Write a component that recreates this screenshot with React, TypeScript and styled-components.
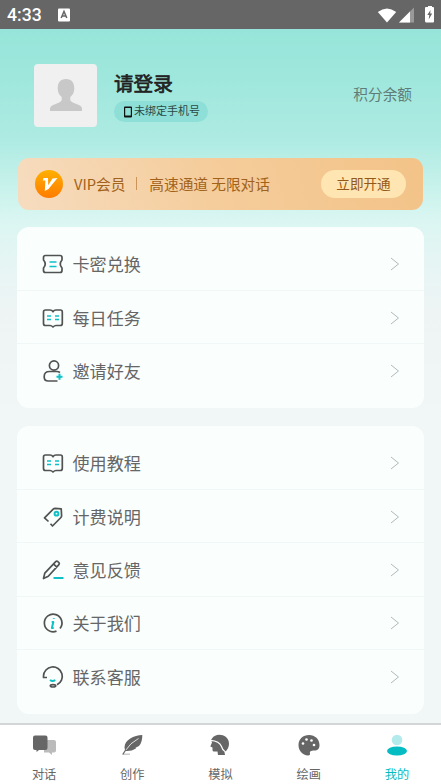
import React from 'react';
import styled, { createGlobalStyle } from 'styled-components';

const GlobalStyle = createGlobalStyle`
  * { box-sizing: border-box; }
  body { margin: 0; font-family: "Noto Sans CJK SC", sans-serif; }
  svg { display: block; flex: none; }
`;

const Screen = styled.div`
  width: 441px;
  height: 784px;
  overflow: hidden;
  display: flex;
  flex-direction: column;
  background: linear-gradient(180deg, #97e5da 29px, #9fe7dd 80px, #aeebe2 140px, #c4f1ea 180px, #dbf6f2 222px, #e5f5f4 260px, #eef4f4 310px, #f1f6f7 420px);
`;

const StatusBar = styled.header`
  height: 29px;
  flex: none;
  display: flex;
  align-items: center;
  padding: 1px 7px 0 7px;
  background: #666;
  color: #fff;
`;

const Clock = styled.span`
  width: 51px;
  font: 500 17.6px/28px Roboto, sans-serif;
`;

const StatusIcons = styled.div`
  display: flex;
  margin-left: auto;
`;

const Profile = styled.section`
  height: 129px;
  flex: none;
  display: flex;
  padding: 35px 29px 0 34px;
`;

const Avatar = styled.div`
  width: 63px;
  height: 63px;
  border-radius: 4px;
  background: #f0f0f0;
  overflow: hidden;
`;

const Identity = styled.div`
  margin-left: 17px;
`;

const Name = styled.h1`
  margin: 4px 0 4px;
  font-size: 19.6px;
  line-height: 29px;
  font-weight: 400;
  -webkit-text-stroke: 0.7px #222;
  color: #222;
`;

const PhoneTag = styled.div`
  display: flex;
  align-items: center;
  width: 94px;
  height: 21px;
  padding-left: 10px;
  gap: 2px;
  border-radius: 11px;
  background: #8edfd8;
  color: #2c4845;
  font-size: 11px;
  line-height: 19px;
  white-space: nowrap;
`;

const PhoneText = styled.span`
  padding-bottom: 2px;
`;

const Points = styled.span`
  margin: 19px 0 0 auto;
  font-size: 14.67px;
  line-height: 21px;
  color: #607c78;
`;

const VipBanner = styled.section`
  height: 52px;
  flex: none;
  margin: 0 18px 17px 18px;
  padding: 0 17px;
  display: flex;
  align-items: center;
  border-radius: 11px;
  background: linear-gradient(75deg, #f6dcbf, #f5cc9a 50%, #f3c388);
  color: #a1621a;
  font-size: 14.67px;
  white-space: nowrap;
`;

const VipText = styled.span`
  padding-bottom: 2px;
`;

const VipLabel = styled(VipText)`
  margin-left: 11px;
`;

const VipDivider = styled.i`
  width: 1px;
  height: 13px;
  margin: 0 12px 1px 11px;
  background: #c99559;
`;

const OpenButton = styled.button`
  margin-left: auto;
  width: 85px;
  height: 28px;
  padding: 0 0 2px;
  border: 0;
  border-radius: 14px;
  background: #ffe5b1;
  color: #955917;
  font: 13.6px/26px "Noto Sans CJK SC", sans-serif;
`;

const Card = styled.section<{ $height: number }>`
  height: ${(p) => p.$height}px;
  flex: none;
  margin: 0 17px 18px;
  padding-top: 10.5px;
  border-radius: 12px;
  background: #fafffe;
`;

const MenuRow = styled.div`
  height: 53.4px;
  display: flex;
  align-items: center;
  padding: 0 23px 0 25px;
  font-size: 17.1px;
  line-height: 26px;
  color: #666;
  & + & { box-shadow: 0 -1px #f0f7f7; }
`;

const MenuLabel = styled.span`
  margin-left: 8.5px;
  flex: 1;
`;

const TabBar = styled.nav`
  height: 62px;
  flex: none;
  margin-top: -9px;
  display: grid;
  grid-template-columns: repeat(5, 1fr);
  background: #fff;
  border-top: 2px solid #d2d6d6;
`;

const Tab = styled.div<{ $active?: boolean }>`
  display: flex;
  flex-direction: column;
  align-items: center;
  padding-top: 8px;
  gap: 8px;
  font-size: 12.2px;
  line-height: 18px;
  color: ${(p) => (p.$active ? '#04bcc2' : '#666')};
`;

const teal = '#0fc0c7';

type IconName = 'ticket' | 'book' | 'invite' | 'tag' | 'pencil' | 'info' | 'support';

const glyphs: Record<IconName, React.ReactNode> = {
  ticket: (
    <>
      <path d="M3.500 2.500h14.500q2 0 2 2V7q-3.500 4 0 8v2.500q0 2-2 2H3.500q-2 0-2-2V15q3.500-4 0-8V4.500q0-2 2-2Z" />
      <path d="M7.500 9h7M7.500 13.500h7" stroke={teal} />
    </>
  ),
  book: (
    <>
      <path d="M3.500 3H8q2 0 3 1.700Q12 3 14 3h4.500Q20.300 3 20.300 5v11.500q0 2-2 2H14q-1.500 0-3 1.500Q9.500 18.500 8 18.500H3.500q-2 0-2-2V5q0-2 2-2Z" />
      <path d="M5 9h4M5 12.500h4M13 9h4M13 12.500h4" stroke={teal} />
    </>
  ),
  invite: (
    <>
      <circle cx="12" cy="5.500" r="4.600" />
      <path d="M18 12.500Q16.500 11.500 14.500 11.500H7.500q-5.300 0-5.300 5v.5q0 4 4 4h9.300" />
      <path d="M17.500 13.800v6M14.500 16.800h6" stroke={teal} strokeWidth="2" />
    </>
  ),
  tag: (
    <>
      <path d="M6.500 15.500 2.500 11.800l8.700-8.700q.8-.8 2-.8l6 .5.400 7q0 1-.700 1.700L10.500 20 8.500 17.800" />
      <circle cx="14.500" cy="7.700" r="1.900" stroke={teal} strokeWidth="2" />
    </>
  ),
  pencil: (
    <>
      <path d="m1.500 19.500 1.300-5.400L13.700 2.600q1-1 2-.1l1.200 1.200q.9.900 0 1.900L6.300 17.300ZM11.500 4.900l3.500 3.400" />
      <path d="M11.500 19H21.500" stroke={teal} strokeWidth="2" />
    </>
  ),
  info: (
    <>
      <path d="M14.500 19.100a8.800 8.800 0 1 1 3.500-2.600" />
      <path d="M9.700 10h1.600l-1.400 6h1.800M11.800 6.300v.7" stroke={teal} strokeWidth="2" />
    </>
  ),
  support: (
    <>
      <path d="M5 11.500H1.500V10a9.400 9.400 0 1 1 13.500 8.800" />
      <path d="M8 14q2.700 2 5.200 0" stroke={teal} strokeWidth="2" />
      <ellipse cx="11" cy="19.800" rx="2.700" ry="1.200" />
    </>
  ),
};

const MenuIcon = ({ name }: { name: IconName }) => (
  <svg width="22" height="22" viewBox="0 0 22 22" overflow="visible" fill="none" stroke="#515353" strokeWidth="1.700" strokeLinejoin="round">
    {glyphs[name]}
  </svg>
);

const Chevron = () => (
  <svg width="14" height="16" viewBox="0 0 14 16" fill="none" stroke="#b2b7b9">
    <path d="m4 2 7.500 6L4 14" />
  </svg>
);

const MenuCard = ({ items, height }: { items: [IconName, string][]; height: number }) => (
  <Card $height={height}>
    {items.map(([icon, label]) => (
      <MenuRow key={label}>
        <MenuIcon name={icon} />
        <MenuLabel>{label}</MenuLabel>
        <Chevron />
      </MenuRow>
    ))}
  </Card>
);

const TabIcon = ({ children }: { children: React.ReactNode }) => (
  <svg width="26" height="24" viewBox="0 0 26 24" fill="#666">{children}</svg>
);

export default function App() {
  return (
    <Screen>
      <GlobalStyle />
      <StatusBar>
        <Clock>4:33</Clock>
        <svg width="12" height="14" viewBox="0 0 12 14">
          <rect y=".5" width="12" height="13" rx="1" fill="#fff" />
          <path d="m3.200 10 2.800-6.500L8.800 10M4.200 8h3.600" fill="none" stroke="#666" strokeWidth="1.500" />
        </svg>
        <StatusIcons>
          <svg width="57" height="20" viewBox="0 0 57 20" fill="#fff">
            <path d="M.8 7Q10 0 19.200 7L10 17.600Z" />
            <path d="m22 17.500 15-15v15Z" fill="#999" />
            <path d="m22 17.500 11-11v11Z" />
            <path d="M49 2h2V1h4v1h1q1 0 1 1v13.500q0 1-1 1h-6.500q-1.500 0-1.500-1.500V3q0-1 1-1Z" />
            <path d="m53.500 5-3.200 5h2l-.6 4.500 3.500-6h-2Z" fill="#666" />
          </svg>
        </StatusIcons>
      </StatusBar>

      <Profile>
        <Avatar>
          <svg width="63" height="63" viewBox="0 0 63 63" fill="#c8c8c8">
            <path d="M32 15c6 0 8.300 4 8.300 9.500 0 4-1.800 7-4 8.500v2.500c0 1.500.9 2.200 2.500 2.900l6 2.600c2.300 1 3.200 2 3.200 4V47H16v-2c0-2 .9-3 3.200-4l6-2.600c1.600-.7 2.500-1.400 2.500-2.900V33c-2.200-1.500-4-4.500-4-8.500C23.700 19 26 15 32 15Z" />
          </svg>
        </Avatar>
        <Identity>
          <Name>请登录</Name>
          <PhoneTag>
            <svg width="8" height="12" viewBox="0 0 8 12">
              <path fill="#111" fillRule="evenodd" d="M1 .5h6q1 0 1 1v9q0 1-1 1H1q-1 0-1-1v-9q0-1 1-1ZM1.200 2v7.500h5.600V2Z" />
            </svg>
            <PhoneText>未绑定手机号</PhoneText>
          </PhoneTag>
        </Identity>
        <Points>积分余额</Points>
      </Profile>

      <VipBanner>
        <svg width="28" height="28" viewBox="0 0 28 28">
          <defs>
            <linearGradient id="coin" x2="0" y2="1">
              <stop stopColor="#ffb000" />
              <stop offset="1" stopColor="#ff7b00" />
            </linearGradient>
          </defs>
          <circle cx="14" cy="14" r="14" fill="url(#coin)" />
          <path d="M8.500 8H13l.2 7.200L17.500 8.600 22.500 8 13.500 19 9.800 21l.6-10.500H7.800Z" fill="#fff" />
        </svg>
        <VipLabel>VIP会员</VipLabel>
        <VipDivider />
        <VipText>高速通道 无限对话</VipText>
        <OpenButton>立即开通</OpenButton>
      </VipBanner>

      <MenuCard height={181} items={[['ticket', '卡密兑换'], ['book', '每日任务'], ['invite', '邀请好友']]} />
      <MenuCard
        height={288}
        items={[['book', '使用教程'], ['tag', '计费说明'], ['pencil', '意见反馈'], ['info', '关于我们'], ['support', '联系客服']]}
      />

      <TabBar>
        <Tab>
          <TabIcon>
            <path d="M13 7h10q2 0 2 2v8.500q0 2-2 2h-2V22l-3-2.500h-5Z" fill="#bbb" />
            <path d="M4 2.500h10.500q2 0 2 2V15q0 2-2 2H8l-2.500 2v-2H4q-2 0-2-2V4.500q0-2 2-2Z" />
          </TabIcon>
          对话
        </Tab>
        <Tab>
          <TabIcon>
            <path d="M4 20.500h7V22H4Z" fill="#ccc" />
            <path d="M23.300 2C15 2.500 5.500 6.500 5.500 14.500q0 2.800 1.700 3.500 5.500.2 9.800-2.500l-.5-.8 3.500-1.700q3.500-4 3.300-11Z" />
            <path d="M6.500 17.500Q11 10 19.500 5.500" fill="none" stroke="#fff" strokeWidth=".8" />
            <path d="M3.700 21.500 7 16.500" stroke="#666" strokeWidth="1.300" />
          </TabIcon>
          创作
        </Tab>
        <Tab>
          <TabIcon>
            <path d="M5 5.500C8 .5 15 .8 19 4c4 3.500 3.900 9.500.5 13.500l-2 1.800.5 2.700h-7l-.5-3.500H7q-1.500 0-1.500-1.500v-2.500L3.300 13.500 5 9.500 4 7Z" />
            <path d="M3.500 7.300Q12.500 8 14.500 13.500q1 4 4 5.500" fill="none" stroke="#fff" strokeWidth="1.200" />
          </TabIcon>
          模拟
        </Tab>
        <Tab>
          <TabIcon>
            <path d="M13 2c6 0 10.500 4.200 10.500 10 0 4-2 5.500-5 5.500-4 0-5 1.300-4.500 3 .2 1.200-.3 2-2 2C6.500 22 2.500 18 2.500 12S7 2 13 2Z" />
            <g fill="#fff">
              <circle cx="7" cy="10.500" r="1.300" />
              <circle cx="10.500" cy="6.500" r="1.300" />
              <circle cx="15.500" cy="7.500" r="1.300" />
              <circle cx="18" cy="12" r="1.300" />
            </g>
          </TabIcon>
          绘画
        </Tab>
        <Tab $active>
          <TabIcon>
            <circle cx="13" cy="7" r="5.300" fill="#b3eaec" />
            <ellipse cx="13" cy="18" rx="10" ry="4.500" fill="#04bcc2" />
          </TabIcon>
          我的
        </Tab>
      </TabBar>
    </Screen>
  );
}
